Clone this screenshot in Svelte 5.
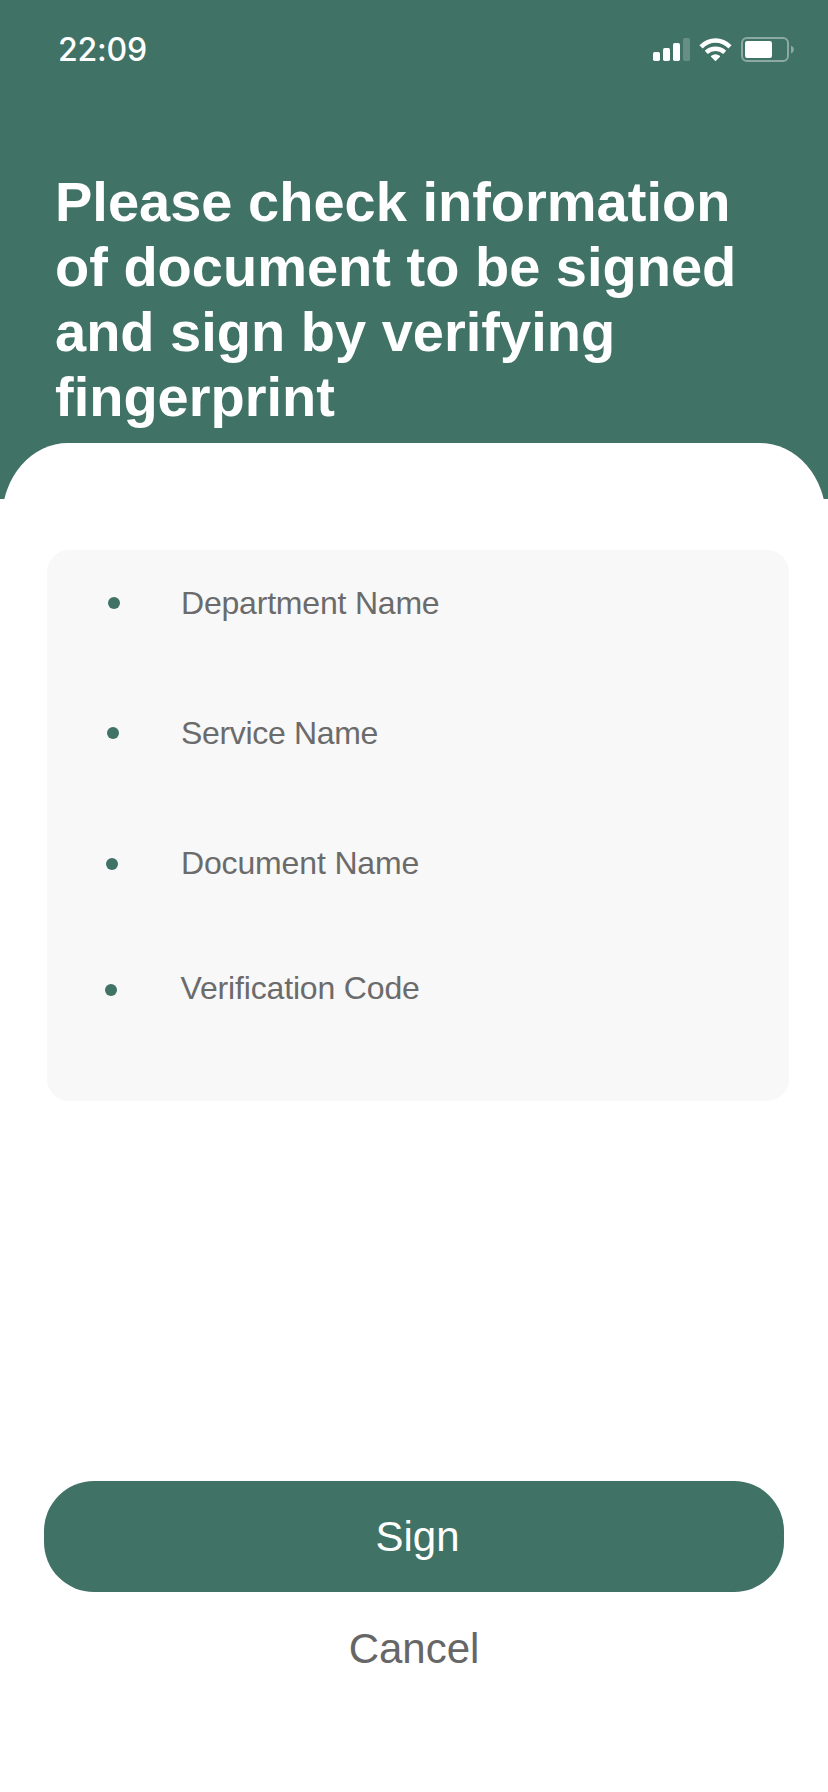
<script>
  const fields = [
    { label: 'Department Name', top: 0, dotX: 0, dotY: 0, shift: 0, spacing: -0.2 },
    { label: 'Service Name', top: 94, dotX: -1, dotY: 0, shift: 0, spacing: -0.33 },
    { label: 'Document Name', top: 94, dotX: -2, dotY: 2, shift: 0, spacing: -0.15 },
    { label: 'Verification Code', top: 89, dotX: -3, dotY: 3, shift: -0.5, spacing: -0.16 }
  ];
</script>

<main>
  <header>
    <div class="status">
      <span class="time">22:09</span>
      <svg class="indicators" width="142" height="26" viewBox="652 37 142 26" aria-hidden="true">
        <g fill="#fff">
          <rect x="653" y="52" width="7" height="9" rx="1.7" />
          <rect x="663" y="48" width="7" height="13" rx="1.7" />
          <rect x="673" y="43" width="7" height="18" rx="1.7" />
          <rect x="683" y="38" width="7" height="23" rx="1.7" opacity=".2" />
          <path d="M715.5 61.2 L711 56.8 Q710.6 56.2 711.2 55.7 Q715.5 52.7 719.8 55.7 Q720.4 56.2 720 56.8 Z" />
        </g>
        <g fill="none" stroke="#fff">
          <path d="M701 46.8 Q707.4 40.5 715.5 40.5 T730 46.8" stroke-width="4.5" />
          <path d="M706.3 52.3 Q710.2 48.7 715.5 48.7 T724.7 52.3" stroke-width="4.4" />
          <rect x="742" y="38" width="46" height="23" rx="5" stroke-width="2" opacity=".4" />
        </g>
        <rect x="745" y="41" width="27" height="17" rx="2.2" fill="#fff" />
        <path d="M791 45.5 Q794 46.8 794 49.5 T791 53.5 Z" fill="#fff" opacity=".4" />
      </svg>
    </div>
    <h1>Please check information<br />of document to be signed<br />and sign by verifying<br />fingerprint</h1>
    <div class="curve"></div>
  </header>

  <ul>
    {#each fields as field}
      <li style="margin-top: {field.top}px">
        <span
          class="dot"
          style="margin: {field.dotY}px {field.shift - field.dotX}px 0 {field.dotX}px"
        ></span>
        <span style="letter-spacing: {field.spacing}px">{field.label}</span>
      </li>
    {/each}
  </ul>

  <div class="actions">
    <button class="sign">Sign</button>
    <button class="cancel">Cancel</button>
  </div>
</main>

<style>
  :global(body) {
    background: #fff;
  }
  main {
    width: 828px;
    height: 1792px;
    display: flex;
    flex-direction: column;
    background: #fff;
    font-family: 'Liberation Sans', Arial, sans-serif;
    overflow: hidden;
  }
  header {
    height: 499px;
    flex: none;
    display: flex;
    flex-direction: column;
    overflow: hidden;
    background: #407266;
    color: #fff;
  }
  .status {
    display: flex;
    justify-content: space-between;
    align-items: center;
    height: 26px;
    padding: 37px 34px 0 58px;
  }
  .time {
    font: 500 32px/26px Inter, sans-serif;
    letter-spacing: -0.2px;
  }
  h1 {
    margin: 106px 0 0 55px;
    font-size: 56px;
    line-height: 65px;
    font-weight: 700;
    white-space: nowrap;
    font-variant-ligatures: none;
  }
  .curve {
    flex: none;
    height: 152px;
    margin: 14px 2px 0;
    background: #fff;
    border-radius: 66px / 76px;
  }
  ul {
    box-sizing: border-box;
    flex: none;
    width: 742px;
    height: 551px;
    margin: 51px 0 0 47px;
    padding: 35px 0 0 61px;
    list-style: none;
    background: #f8f8f8;
    border-radius: 22px;
  }
  li {
    display: flex;
    align-items: center;
    gap: 61px;
    height: 36px;
    color: #6b6b6b;
    font-size: 32px;
    line-height: 36px;
    white-space: nowrap;
    font-variant-ligatures: none;
  }
  .dot {
    width: 12px;
    height: 12px;
    border-radius: 50%;
    background: #407266;
  }
  .actions {
    display: flex;
    flex-direction: column;
    width: 740px;
    margin: 380px 0 0 44px;
  }
  button {
    border: 0;
    padding: 0;
    font: 42px/48px 'Liberation Sans', Arial, sans-serif;
  }
  .sign {
    height: 111px;
    padding-left: 7px;
    border-radius: 50px;
    background: #407266;
    color: #fff;
  }
  .cancel {
    height: 114px;
    background: none;
    color: #666;
  }
</style>
